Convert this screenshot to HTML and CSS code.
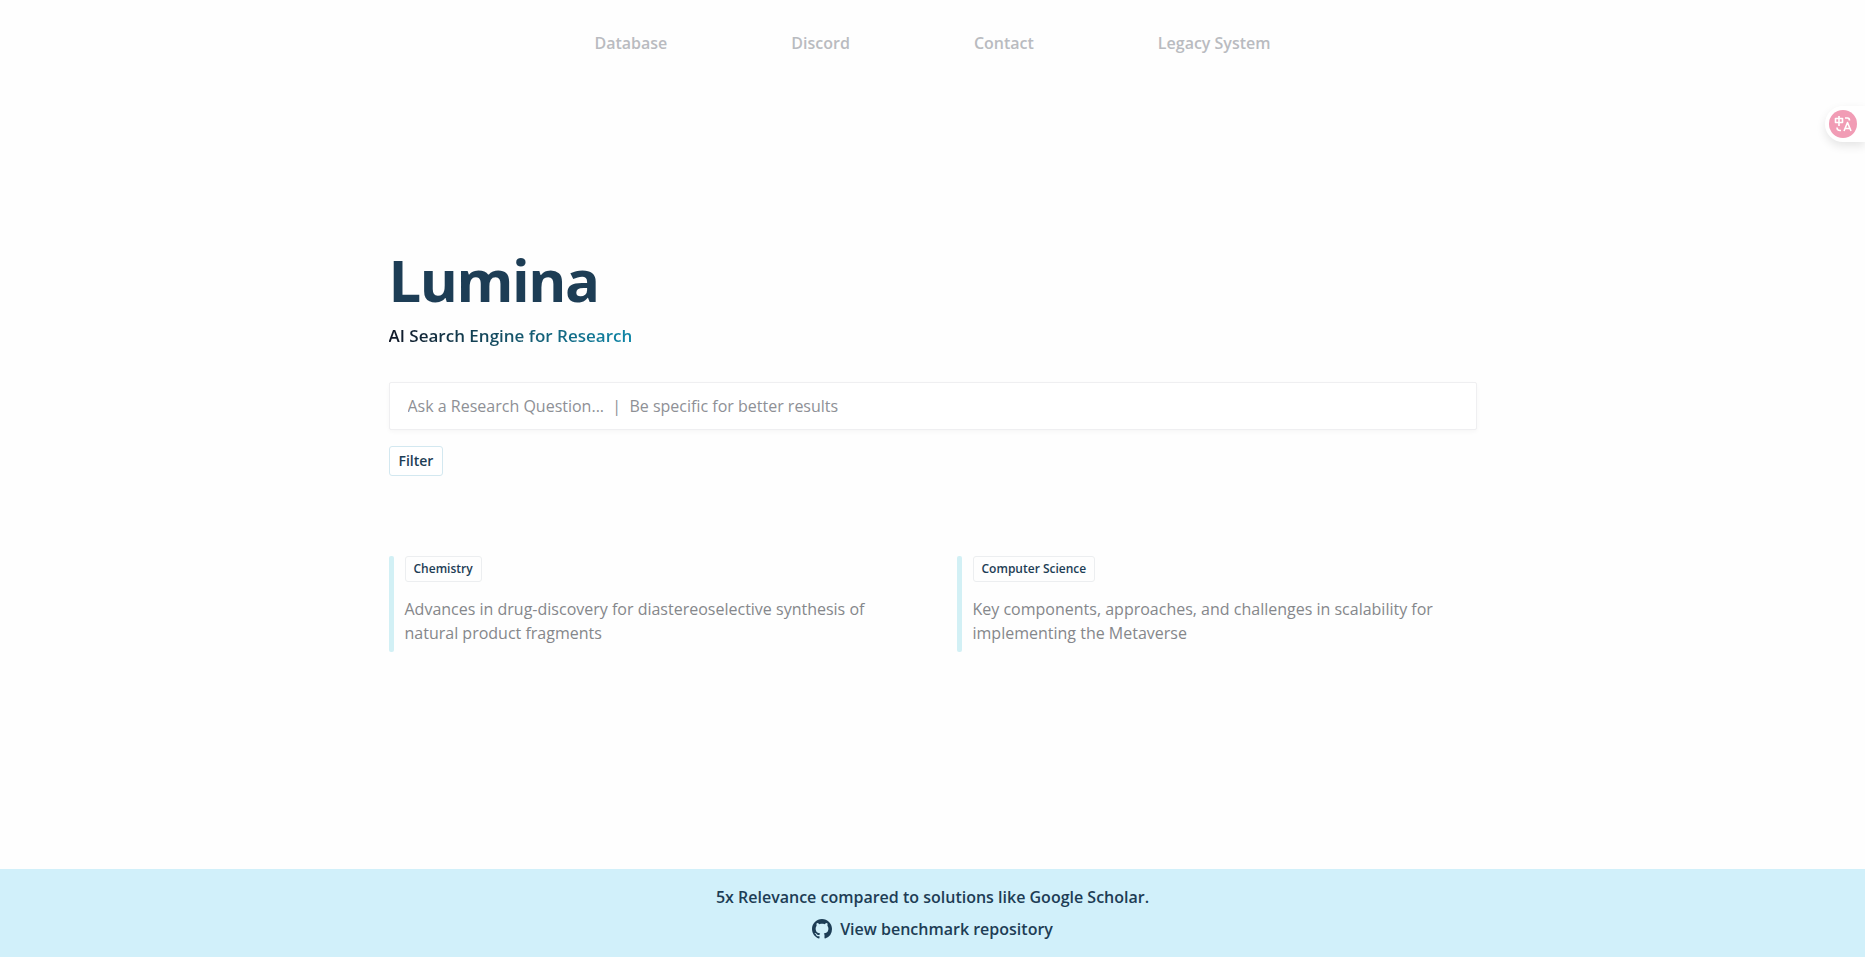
FILE: index.html
```html
<!DOCTYPE html>
<html lang="en">
<head>
  <meta charset="UTF-8">
  <meta name="viewport" content="width=device-width, initial-scale=1">
  <title>Lumina</title>
  <link rel="stylesheet" href="styles.css">
</head>

<body>
  <nav class="nav">
    <a href="#">Database</a>
    <a href="#">Discord</a>
    <a href="#">Contact</a>
    <a href="#">Legacy System</a>
  </nav>

  <main class="container">
    <h1 class="title">Lumina</h1>
    <p class="tagline">AI Search Engine for Research</p>

    <form class="search">
      <input type="text" class="search-input" aria-label="Research question" placeholder="Ask a Research Question...&nbsp; |&nbsp; Be specific for better results">
      <button type="button" class="filter">Filter</button>
    </form>

    <div class="examples">
      <div class="example">
        <span class="tag">Chemistry</span>
        <p>Advances in drug-discovery for diastereoselective synthesis of natural product fragments</p>
      </div>
      <div class="example">
        <span class="tag">Computer Science</span>
        <p>Key components, approaches, and challenges in scalability for implementing the Metaverse</p>
      </div>
    </div>
  </main>

  <footer class="footer">
    <p>5x Relevance compared to solutions like Google Scholar.</p>
    <a href="#" class="repo">
      <svg class="repo-icon" viewBox="0 0 16 16" aria-hidden="true">
        <path fill="currentColor" d="M8 0C3.58 0 0 3.58 0 8c0 3.54 2.29 6.53 5.47 7.59.4.07.55-.17.55-.38 0-.19-.01-.82-.01-1.49-2.01.37-2.53-.49-2.69-.94-.09-.23-.48-.94-.82-1.13-.28-.15-.68-.52-.01-.53.63-.01 1.08.58 1.23.82.72 1.21 1.87.87 2.33.66.07-.52.28-.87.51-1.07-1.78-.2-3.64-.89-3.64-3.95 0-.87.31-1.59.82-2.15-.08-.2-.36-1.02.08-2.12 0 0 .67-.21 2.2.82.64-.18 1.32-.27 2-.27s1.36.09 2 .27c1.53-1.04 2.2-.82 2.2-.82.44 1.1.16 1.92.08 2.12.51.56.82 1.27.82 2.15 0 3.07-1.87 3.75-3.65 3.95.29.25.54.73.54 1.48 0 1.07-.01 1.93-.01 2.2 0 .21.15.46.55.38A8.01 8.01 0 0 0 16 8c0-4.42-3.58-8-8-8z"/>
      </svg>
      View benchmark repository
    </a>
  </footer>

  <!-- floating translate tab, stuck to the right edge -->
  <button type="button" class="translate" aria-label="Translate">
    <svg viewBox="0 0 28 28" aria-hidden="true">
      <circle cx="14" cy="14" r="14" fill="#f19cb5"/>
      <g fill="none" stroke="#fff" stroke-width="1.6" stroke-linejoin="round">
        <path d="M6.500 8.500h7v4h-7zM10 6v10"/>
        <path d="M16 8h2.500q2 0 2 2.500"/>
        <path d="M8 17.500q0 3 3 3h1"/>
        <path d="M15 21l3.500-8.500L22 21M16.500 18.500h4"/>
      </g>
    </svg>
  </button>
</body>
</html>
```
FILE: styles.css
```css
* { box-sizing: border-box; }

body {
  display: flex;
  flex-direction: column;
  min-height: 100vh;
  margin: 0;
  background: #fefefe;
  color: #1d3d55;
  font-family: "Segoe UI", "Open Sans", "Noto Sans", sans-serif;
  font-size: 16px;
  line-height: 24px;
}

h1, p { margin: 0; }
a { color: inherit; text-decoration: none; }

/* top nav */
.nav {
  display: flex;
  justify-content: center;
  gap: 124px;
  padding: 31px 32px;
  color: #b9bbc0;
  font-weight: 600;
}

/* main column */
.container {
  flex: 1;
  width: 100%;
  max-width: 1152px;
  margin: 0 auto;
  padding: 158px 32px 64px;
}
.title {
  font-size: 58px;
  font-weight: 700;
  line-height: 72px;
  letter-spacing: -0.025em;
}
.tagline {
  width: fit-content;
  margin-top: 4px;
  font-size: 17px;
  font-weight: 600;
  line-height: 32px;
  background: linear-gradient(to right, #111827, #155e75 60%, #0e86a8);
  -webkit-background-clip: text;
  background-clip: text;
  color: transparent;
}

/* search */
.search { margin-top: 30px; }
.search-input {
  display: block;
  width: 100%;
  height: 48px;
  padding: 0 18px;
  border: 1px solid #efeff1;
  border-radius: 2px;
  background: #fff;
  box-shadow: 0 2px 4px rgba(0, 0, 0, 0.03);
  color: inherit;
  font: inherit;
}
.search-input::placeholder { color: #8e9096; opacity: 1; }
.filter {
  display: block;
  height: 30px;
  margin-top: 16px;
  padding: 0 9px;
  border: 1px solid #d3e8f0;
  border-radius: 3px;
  background: #fff;
  color: inherit;
  font: 600 14px/20px "Segoe UI", "Open Sans", "Noto Sans", sans-serif;
}

/* example questions */
.examples {
  display: grid;
  grid-template-columns: 1fr 1fr;
  gap: 48px;
  margin-top: 80px;
}
.example {
  position: relative;
  padding-left: 16px;
  color: #85878b;
}
.example::before {
  content: "";
  position: absolute;
  top: 0;
  bottom: 0;
  left: 0;
  width: 5px;
  border-radius: 2px;
  background: #d2f0f5;
}
.tag {
  display: block;
  width: fit-content;
  padding: 2px 8px;
  border: 1px solid #eceef0;
  border-radius: 3px;
  color: #1d3d55;
  font-size: 12px;
  font-weight: 600;
  line-height: 20px;
}
.example p { margin-top: 15px; padding-bottom: 7px; }

/* bottom banner */
.footer {
  display: flex;
  flex-direction: column;
  align-items: center;
  gap: 8px;
  padding: 16px;
  background: #d1f0fa;
  font-weight: 600;
}
.repo {
  display: flex;
  align-items: center;
  gap: 8px;
}
.repo-icon { width: 20px; height: 20px; }

/* translate tab */
.translate {
  position: fixed;
  top: 106px;
  right: 0;
  display: flex;
  padding: 4px 8px 4px 4px;
  border: 0;
  border-radius: 18px 0 0 18px;
  background: #fff;
  box-shadow: 0 4px 10px rgba(0, 0, 0, 0.1);
}
.translate svg { width: 28px; height: 28px; }
```
